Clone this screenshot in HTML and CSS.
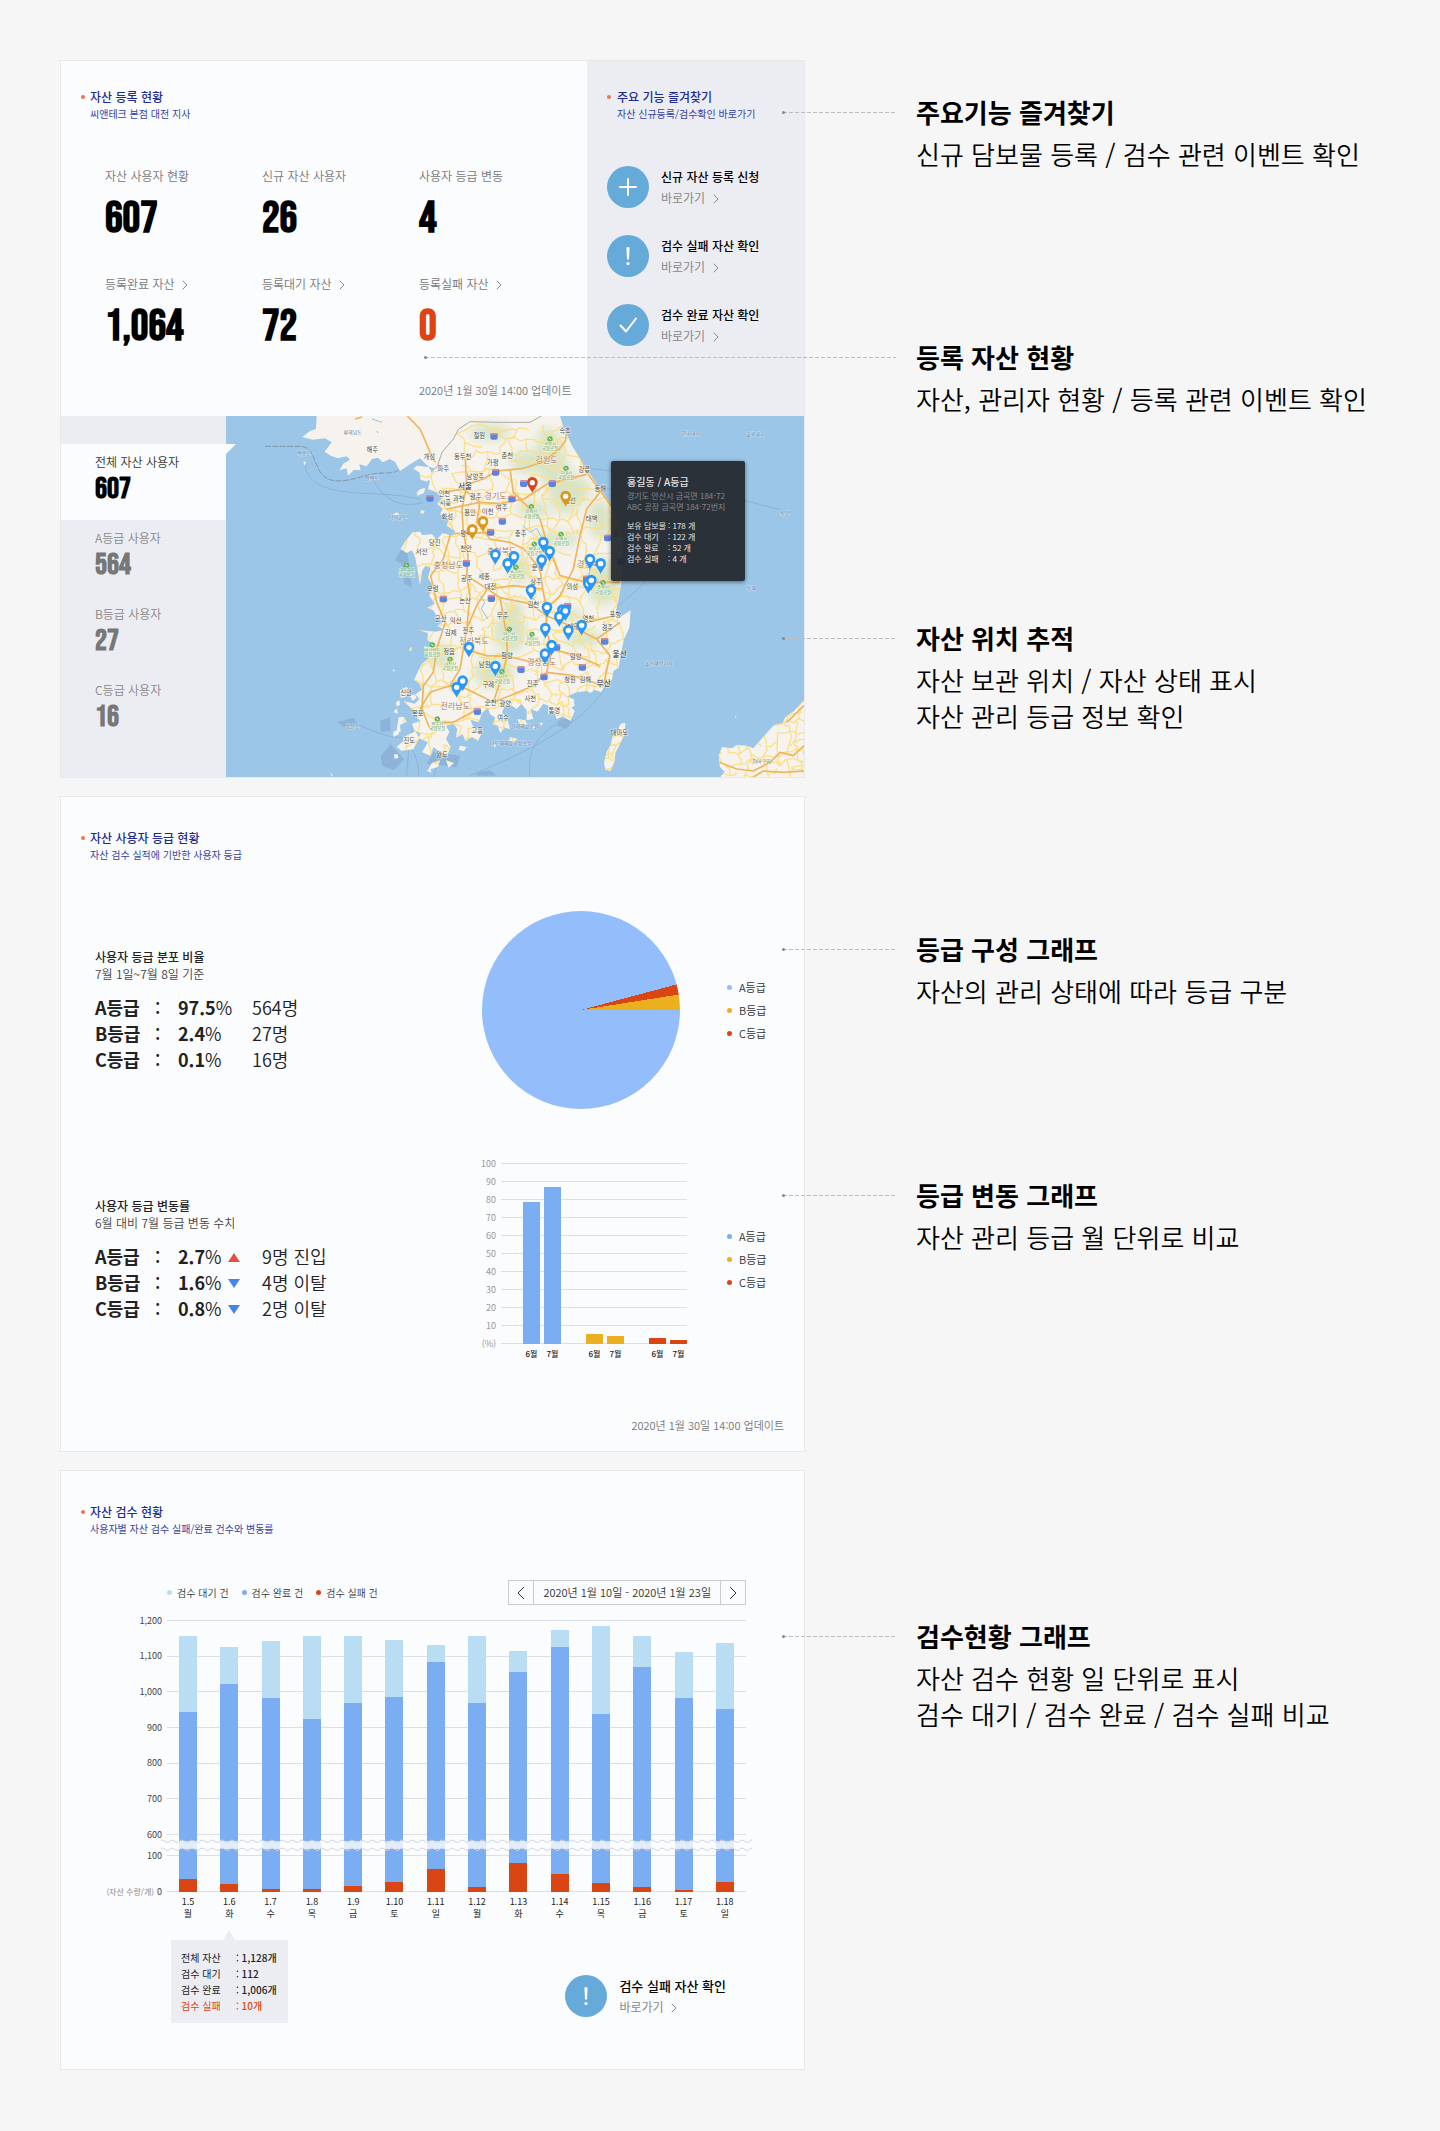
FILE: index.html
```html
<!DOCTYPE html>
<html lang="ko">
<head>
<meta charset="utf-8">
<meta name="viewport" content="width=device-width, initial-scale=1">
<title>자산 관리 대시보드</title>
<link rel="stylesheet" href="styles.css">
</head>
<body>
<svg class="sprite" aria-hidden="true">
  <symbol id="chevron" viewBox="0 0 6 10"><path d="M1 1l4 4-4 4" fill="none" stroke="currentColor" stroke-linecap="round"/></symbol>
  <symbol id="arrow-left" viewBox="0 0 8 14"><path d="M7 1L1 7l6 6" fill="none" stroke="currentColor"/></symbol>
  <symbol id="arrow-right" viewBox="0 0 8 14"><path d="M1 1l6 6-6 6" fill="none" stroke="currentColor"/></symbol>
  <symbol id="plus" viewBox="0 0 42 42"><circle cx="21" cy="21" r="21" fill="#66aada"/><path d="M21 13v16M13 21h16" stroke="#fff" stroke-width="2" stroke-linecap="round"/></symbol>
  <symbol id="alert" viewBox="0 0 42 42"><circle cx="21" cy="21" r="21" fill="#66aada"/><path d="M19.4 12.8q1.6-1.600 3.200 0L22 24.400h-2z" fill="#fff"/><circle cx="21" cy="28.600" r="1.600" fill="#fff"/></symbol>
  <symbol id="check" viewBox="0 0 42 42"><circle cx="21" cy="21" r="21" fill="#66aada"/><path d="M13.500 21.500l5.500 6 10-13" fill="none" stroke="#fff" stroke-width="2" stroke-linecap="round" stroke-linejoin="round"/></symbol>
</svg>

<main class="page">
  <section class="row">
    <article class="card">
      <div class="overview">
        <div class="overview-main">
          <header class="head"><h2>자산 등록 현황</h2><p>씨앤테크 본점 대전 지사</p></header>
          <dl class="stats">
            <div><dt>자산 사용자 현황</dt><dd>607</dd></div>
            <div><dt>신규 자산 사용자</dt><dd>26</dd></div>
            <div><dt>사용자 등급 변동</dt><dd>4</dd></div>
            <div><dt><a href="#done">등록완료 자산 <svg class="chev"><use href="#chevron"/></svg></a></dt><dd>1,064</dd></div>
            <div><dt><a href="#wait">등록대기 자산 <svg class="chev"><use href="#chevron"/></svg></a></dt><dd>72</dd></div>
            <div><dt><a href="#fail">등록실패 자산 <svg class="chev"><use href="#chevron"/></svg></a></dt><dd class="danger">0</dd></div>
          </dl>
          <div class="stats-foot"><p class="updated">2020년 1월 30일 14:00 업데이트</p></div>
        </div>
        <div class="quick">
          <header class="head"><h2>주요 기능 즐겨찾기</h2><p>자산 신규등록/검수확인 바로가기</p></header>
          <div class="quick-list">
            <a class="action" href="#new"><svg class="action-icon"><use href="#plus"/></svg><span class="action-text"><strong>신규 자산 등록 신청</strong><span>바로가기 <svg class="chev"><use href="#chevron"/></svg></span></span></a>
            <a class="action" href="#failed"><svg class="action-icon"><use href="#alert"/></svg><span class="action-text"><strong>검수 실패 자산 확인</strong><span>바로가기 <svg class="chev"><use href="#chevron"/></svg></span></span></a>
            <a class="action" href="#passed"><svg class="action-icon"><use href="#check"/></svg><span class="action-text"><strong>검수 완료 자산 확인</strong><span>바로가기 <svg class="chev"><use href="#chevron"/></svg></span></span></a>
          </div>
        </div>
      </div>
      <div class="tracking">
        <nav class="grades">
          <button class="grade active" type="button"><span>전체 자산 사용자</span><b>607</b></button>
          <button class="grade" type="button"><span>A등급 사용자</span><b>564</b></button>
          <button class="grade" type="button"><span>B등급 사용자</span><b>27</b></button>
          <button class="grade" type="button"><span>C등급 사용자</span><b>16</b></button>
        </nav>
        <div class="map">
          <svg class="map-canvas" viewBox="-522 21 1734 1083" preserveAspectRatio="xMidYMid slice" role="img" aria-label="자산 위치 지도">
            <defs>
              <path id="mainland" d="M-250 21L-252 60-270 66-293 84-262 92-225 88-205 100-226 128-208 140-186 148-160 142-150 152-170 164-182 184-160 178-156 200-138 182-118 184-122 166-100 172-84 150-66 146-52 160-30 150-14 160 0 186 30 166 60 148 84 172 100 178 112 172 96 190 74 206 90 216 84 240 110 250 126 268 112 284 128 300 120 316 146 330 140 350 166 366 158 380 128 372 110 392 96 376 66 378 60 368 38 370 26 384 14 400 2 420 20 432 36 424 46 446 52 480 60 528 66 486 76 470 92 476 84 506 98 530 88 560 104 584 82 596 100 604 116 630 128 640 112 650 134 662 108 668 58 664 84 672 82 694 104 704 98 716 70 712 82 730 86 748 66 764 56 784 42 812 58 824 66 842 46 856 58 870 44 884 10 876 36 900 60 910 46 922 62 936 36 944 44 966 62 972 56 988 84 1000 66 1030 92 1040 100 1014 116 1026 140 1044 152 1014 138 990 148 968 138 950 160 944 172 960 168 986 188 976 196 996 216 984 234 996 246 970 218 950 212 932 236 940 246 912 264 896 270 916 286 926 278 946 294 950 300 972 314 956 330 960 322 930 306 910 314 892 336 890 350 900 364 884 380 904 380 934 400 930 392 900 412 908 430 884 446 890 444 914 462 906 470 930 488 922 512 936 524 906 508 888 524 872 502 862 530 850 560 846 572 852 584 842 604 850 620 820 636 812 640 786 656 776 664 728 672 690 688 656 692 604 660 624 648 606 656 570 664 520 668 400 656 336 636 290 600 240 560 180 516 110 490 54 480 21Z"/>
              <path id="islands" d="M50 170l36 4 8 14-12 30-20-6-4-22-18-10zM62 240l14-4-4 16-20 8-2-10zM64 304l10 2-4 8-10-2zM-290 158l8 0-4 12zM-10 310l8 6-12 6-6-6zM-8 950l4-26 16 0 8 14-20 10 2 20-12-4zM-20 968l18-6-2 14-16 8zM10 985l36-18 12 20-18 34-36 4-14-12 20-16zM-20 910l10-12 4 16zM0 844l20-10 10 12-14 18-14 2zM30 860l14-4 6 10-12 10zM-12 880l10-6 2 14-10 4zM28 720l6-6 2 6-6 8zM-22 784l4-4 2 10zM-18 1036l10 0 4 10-12 4zM-210 1090l8 8-2 6zM96 1062l24-8-6 20-30 8zM138 1054l24 8-16 14zM180 1010l20 4-8 12-16-4zM330 985l22 4-8 10-16-4zM352 930l24 4 8 16-24-4zM486 886l34-16 4 20-22 12zM80 1084l12-4 2 12zM278 1006l12 2-6 8zM420 940l10 4-8 6zM398 950l8 4-8 8zM1006 920l4 4-4 4z"/>
              <path id="tsushima" d="M676 942l-14 2-12 26-12 10-6 28-12 20-8 34 4 20 16 4 12-30 2-24 14-28 14-30z"/>
              <path id="yamaguchi" d="M1212 874l-30 32-26 18-8 18-26 6-40 44-22 26-20-8-30-2-14 10-30-4-10 26 4 34 14 14-16 20H1212z"/>
              <clipPath id="land-clip"><use href="#mainland"/><use href="#islands"/><use href="#tsushima"/><use href="#yamaguchi"/></clipPath>
              <filter id="soft" x="-50%" y="-50%" width="200%" height="200%"><feGaussianBlur stdDeviation="14"/></filter>
            </defs>
            <rect x="-522" y="21" width="1734" height="1083" fill="#9cc6e8"/>
            <g fill="none" stroke="#84a9c9" stroke-width="2">
              <path d="M-405 112H-300C-240 112-270 210-190 216C-130 216-100 190-40 192C10 192 0 165 30 160" stroke="#8296a8" stroke-width="3" stroke-dasharray="18 4"/>
              <path d="M-285 165C-280 260-120 250-50 256S20 262 60 270M-80 215C-50 270 0 300 70 280"/>
              <path d="M560 178C800 200 840 225 1170 310M605 240C800 240 860 250 900 260C840 380 780 500 640 600M900 300L780 470M620 830C560 930 430 1010 210 1100M-130 945C-70 970-40 985 0 985C40 1000 20 1060 20 1100M40 960C10 1010 60 1030 55 1100M130 1050C100 1070 110 1090 100 1104M480 935C420 980 380 1010 390 1104"/>
            </g>
            <path fill="#8db4d8" d="M-190 940l50-14 14 20-40 8zM-58 1040l30-34 40 44-30 34-36-14zM-60 935l30-10 2 40-30 4zM18 400l-34 54 20 10 8 60 24 12zM480 930l40 0-20 30-30-10zM230 1090l40-6 20 16h-60zM100 1030l80 10-10 34-90-10z"/>
            <g fill="#f6f3ee"><use href="#mainland"/><use href="#islands"/><use href="#tsushima"/><use href="#yamaguchi"/></g>
            <g clip-path="url(#land-clip)">
              <g fill="#cfdfb8" opacity=".75" filter="url(#soft)">
                <path d="M420 60q60-10 70 60t60 90-10 80-90-20-50-120z"/>
                <ellipse cx="390" cy="160" rx="60" ry="34"/><ellipse cx="600" cy="330" rx="34" ry="60"/><ellipse cx="400" cy="300" rx="50" ry="24"/>
                <ellipse cx="470" cy="390" rx="70" ry="22"/><ellipse cx="360" cy="480" rx="34" ry="40"/><ellipse cx="610" cy="520" rx="50" ry="70"/>
                <ellipse cx="330" cy="670" rx="50" ry="60"/><ellipse cx="280" cy="790" rx="60" ry="44"/><ellipse cx="120" cy="740" rx="40" ry="34"/><ellipse cx="550" cy="690" rx="60" ry="22"/>
                <ellipse cx="520" cy="620" rx="30" ry="20"/><ellipse cx="270" cy="70" rx="60" ry="24"/><ellipse cx="340" cy="600" rx="30" ry="30"/>
              </g>
              <g id="minor-roads" fill="none" stroke="#fbe08a" stroke-width="4" stroke-linecap="round" stroke-linejoin="round"></g>
              <path fill="none" stroke="#8fc4ea" stroke-width="3" d="M370 350l20 20 20-12 14 26-10 20 26 0M240 560l14 20-10 20 20 30M386 560l20 14-6 24M560 460l10 20-4 20M-84 30l30 10M-70 66l4 6M440 640l10 30"/>
              <g fill="none" stroke="#f0b45c" stroke-width="5" stroke-linejoin="round">
                <path d="M22 21L60 60 76 96 90 130 106 160"/>
                <path d="M-135 30l22-6M190 230L250 210 290 186 370 178 430 158 478 120 496 96 500 66 540 140 560 190 604 250 640 300 664 380"/>
                <path d="M130 250L190 240 240 280 300 284 372 270 440 226 520 206 560 196"/>
                <path d="M196 150L200 230 186 300 190 370 204 440 200 500 262 540 300 566 390 584 440 620 510 650 560 640 646 620"/>
                <path d="M240 280L230 340 270 390 330 400 372 420 420 480 428 540 440 600 438 660 456 720 440 790 400 830 330 860 280 880 200 840 150 830 90 850 60 900"/>
                <path d="M120 320L150 380 130 450 92 500 110 580 136 640 110 720 100 790 70 830 66 900 90 960"/>
                <path d="M262 540L230 590 200 660 190 720 180 780 150 830M200 500L210 560 200 660M190 720L260 740 322 742 400 760 456 720 530 740 600 770"/>
                <path d="M330 180L340 250 420 330 440 400 480 500 560 520 660 520M440 600L480 560 520 480 540 380 560 300 600 250M510 650L590 690 630 740 610 830 520 800 440 790M590 690L660 640M240 280L140 300M300 566L320 680 322 742 300 820 280 880"/>
                <path d="M272 370L190 374 130 372M428 540L340 530 262 540M100 940L160 940 216 910 240 900M1212 890L1160 940M958 1060L1010 1080 1060 1086 1110 1060 1140 1030 1180 1040 1212 1010M1060 1104L1090 1086 1150 1090 1212 1086"/>
              </g>
            </g>
            <path d="M110 178L126 130 160 90 176 60 210 38 300 40 390 40 424 21" fill="none" stroke="#a9a9a6" stroke-width="3"/>
            <g id="map-labels" text-anchor="middle"></g>
            <g id="map-pins"></g>
          </svg>
          <aside class="map-tip">
            <h3>홍길동 / A등급</h3>
            <p>경기도 안산시 금곡면 184-72<br>ABC 공장 금곡면 184-72번지</p>
            <dl><dt>보유 담보물</dt><dd>: 178 개</dd><dt>검수 대기</dt><dd>: 122 개</dd><dt>검수 완료</dt><dd>: 52 개</dd><dt>검수 실패</dt><dd>: 4 개</dd></dl>
          </aside>
        </div>
      </div>
    </article>
    <div class="notes notes-assets">
      <section class="note"><h2>주요기능 즐겨찾기</h2><p>신규 담보물 등록 / 검수 관련 이벤트 확인</p></section>
      <section class="note wide"><h2>등록 자산 현황</h2><p>자산, 관리자 현황 / 등록 관련 이벤트 확인</p></section>
      <section class="note"><h2>자산 위치 추적</h2><p>자산 보관 위치 / 자산 상태 표시<br>자산 관리 등급 정보 확인</p></section>
    </div>
  </section>

  <section class="row">
    <article class="card roomy">
      <header class="head"><h2>자산 사용자 등급 현황</h2><p>자산 검수 실적에 기반한 사용자 등급</p></header>
      <div class="figure first">
        <div class="summary">
          <h3>사용자 등급 분포 비율</h3><p>7월 1일~7월 8일 기준</p>
          <table>
            <tr><th scope="row">A등급</th><td class="colon">:</td><td class="share"><b>97.5</b>%</td><td>564명</td></tr>
            <tr><th scope="row">B등급</th><td class="colon">:</td><td class="share"><b>2.4</b>%</td><td>27명</td></tr>
            <tr><th scope="row">C등급</th><td class="colon">:</td><td class="share"><b>0.1</b>%</td><td>16명</td></tr>
          </table>
        </div>
        <div class="pie" role="img" aria-label="등급 분포"></div>
        <ul class="legend"><li class="a">A등급</li><li class="b">B등급</li><li class="c">C등급</li></ul>
      </div>
      <div class="figure second">
        <div class="summary">
          <h3>사용자 등급 변동률</h3><p>6월 대비 7월 등급 변동 수치</p>
          <table>
            <tr><th scope="row">A등급</th><td class="colon">:</td><td class="rate"><b>2.7</b>%<i class="up"></i></td><td>9명 진입</td></tr>
            <tr><th scope="row">B등급</th><td class="colon">:</td><td class="rate"><b>1.6</b>%<i class="down"></i></td><td>4명 이탈</td></tr>
            <tr><th scope="row">C등급</th><td class="colon">:</td><td class="rate"><b>0.8</b>%<i class="down"></i></td><td>2명 이탈</td></tr>
          </table>
        </div>
        <div class="months">
          <div class="months-ticks"><span>100</span><span>90</span><span>80</span><span>70</span><span>60</span><span>50</span><span>40</span><span>30</span><span>20</span><span>10</span><span>(%)</span></div>
          <div class="months-bars">
            <div class="pair a"><i style="height:78.5%"></i><i style="height:87%"></i></div>
            <div class="pair b"><i style="height:5.5%"></i><i style="height:4.5%"></i></div>
            <div class="pair c"><i style="height:3.5%"></i><i style="height:2%"></i></div>
          </div>
          <div class="months-names"><div class="pair"><span>6월</span><span>7월</span></div><div class="pair"><span>6월</span><span>7월</span></div><div class="pair"><span>6월</span><span>7월</span></div></div>
        </div>
        <ul class="legend"><li class="a strong">A등급</li><li class="b">B등급</li><li class="c">C등급</li></ul>
      </div>
      <p class="updated card-updated">2020년 1월 30일 14:00 업데이트</p>
    </article>
    <div class="notes notes-grades">
      <section class="note"><h2>등급 구성 그래프</h2><p>자산의 관리 상태에 따라 등급 구분</p></section>
      <section class="note"><h2>등급 변동 그래프</h2><p>자산 관리 등급 월 단위로 비교</p></section>
    </div>
  </section>

  <section class="row">
    <article class="card roomy">
      <header class="head"><h2>자산 검수 현황</h2><p>사용자별 자산 검수 실패/완료 건수와 변동률</p></header>
      <div class="inspection">
        <div class="toolbar">
          <ul class="legend inline"><li class="w">검수 대기 건</li><li class="a strong">검수 완료 건</li><li class="c">검수 실패 건</li></ul>
          <div class="range">
            <button type="button" aria-label="이전 기간"><svg><use href="#arrow-left"/></svg></button>
            <span>2020년 1월 10일 - 2020년 1월 23일</span>
            <button type="button" aria-label="다음 기간"><svg><use href="#arrow-right"/></svg></button>
          </div>
        </div>
        <div class="daily">
          <div class="daily-ticks"><span>1,200</span><span>1,100</span><span>1,000</span><span>900</span><span>800</span><span>700</span><span>600</span><span>100</span><span><small>(자산 수량/개)</small> 0</span></div>
          <div class="daily-bars">
            <div><i style="height:76px"></i><i style="height:167px"></i><i style="height:13px"></i></div>
            <div><i style="height:37px"></i><i style="height:200px"></i><i style="height:8px"></i></div>
            <div><i style="height:57px"></i><i style="height:191px"></i><i style="height:3px"></i></div>
            <div><i style="height:83px"></i><i style="height:170px"></i><i style="height:3px"></i></div>
            <div><i style="height:67px"></i><i style="height:183px"></i><i style="height:6px"></i></div>
            <div><i style="height:57px"></i><i style="height:185px"></i><i style="height:10px"></i></div>
            <div><i style="height:17px"></i><i style="height:207px"></i><i style="height:23px"></i></div>
            <div><i style="height:67px"></i><i style="height:184px"></i><i style="height:5px"></i></div>
            <div><i style="height:21px"></i><i style="height:191px"></i><i style="height:29px"></i></div>
            <div><i style="height:17px"></i><i style="height:227px"></i><i style="height:18px"></i></div>
            <div><i style="height:88px"></i><i style="height:169px"></i><i style="height:9px"></i></div>
            <div><i style="height:31px"></i><i style="height:220px"></i><i style="height:5px"></i></div>
            <div><i style="height:46px"></i><i style="height:192px"></i><i style="height:2px"></i></div>
            <div><i style="height:66px"></i><i style="height:173px"></i><i style="height:10px"></i></div>
            <svg class="break" aria-hidden="true">
              <defs><pattern id="wave" width="10" height="12" patternUnits="userSpaceOnUse"><path d="M0 1q2.500 0 5 2t5-2M0 9q2.500 0 5 2t5-2" fill="none" stroke="#cfd3de"/></pattern></defs>
              <rect y="2" width="100%" height="8" fill="#fbfcfe" opacity=".8"/><rect width="100%" height="12" fill="url(#wave)"/>
            </svg>
          </div>
          <div class="daily-names"><span>1.5<br>월</span><span>1.6<br>화</span><span>1.7<br>수</span><span>1.8<br>목</span><span>1.9<br>금</span><span>1.10<br>토</span><span>1.11<br>일</span><span>1.12<br>월</span><span>1.13<br>화</span><span>1.14<br>수</span><span>1.15<br>목</span><span>1.16<br>금</span><span>1.17<br>토</span><span>1.18<br>일</span></div>
        </div>
        <div class="detail-row">
          <dl class="detail"><dt>전체 자산</dt><dd>: <b>1,128개</b></dd><dt>검수 대기</dt><dd>: <b>112</b></dd><dt>검수 완료</dt><dd>: <b>1,006개</b></dd><dt class="danger">검수 실패</dt><dd class="danger">: <b>10개</b></dd></dl>
          <a class="action large" href="#failed"><svg class="action-icon"><use href="#alert"/></svg><span class="action-text"><strong>검수 실패 자산 확인</strong><span>바로가기 <svg class="chev"><use href="#chevron"/></svg></span></span></a>
        </div>
      </div>
    </article>
    <div class="notes notes-inspection">
      <section class="note"><h2>검수현황 그래프</h2><p>자산 검수 현황 일 단위로 표시<br>검수 대기 / 검수 완료 / 검수 실패 비교</p></section>
    </div>
  </section>
</main>
<script src="map.js"></script>
</body>
</html>
```
FILE: styles.css
```css
* { box-sizing: border-box; margin: 0; padding: 0; }
body {
  background: #f6f6f6;
  color: #222;
  font-family: "Noto Sans CJK KR", "Noto Sans", sans-serif;
  font-size: 12px;
  line-height: 18px;
}
a { color: inherit; text-decoration: none; }
button { font: inherit; color: inherit; border: 0; background: none; text-align: left; cursor: pointer; }
ul { list-style: none; }
.sprite { position: absolute; width: 0; height: 0; }
.danger { color: #dc4513; }

.page { display: flex; flex-direction: column; gap: 18px; padding: 60px; }
.row { display: grid; grid-template-columns: 745fr 575fr; }
.card { display: flex; flex-direction: column; min-width: 0; background: #fbfcfe; border: 1px solid #e8e9ea; }
.roomy { padding-top: 32px; }

.head { position: relative; padding-left: 29px; color: #1d2b92; }
.head::before { content: ""; position: absolute; left: 20px; top: 7px; width: 4px; height: 4px; border-radius: 50%; background: #ee7350; }
.head h2 { font-size: 12px; font-weight: 500; line-height: 18px; }
.head p { font-size: 10px; line-height: 16px; color: #3542a3; }

.chev { width: 6px; height: 10px; margin-left: 4px; vertical-align: -1px; color: #888; }
.updated { font-size: 11px; line-height: 16px; font-weight: 350; color: #777; white-space: nowrap; }

.overview { display: grid; grid-template-columns: 526fr 217fr; }
.overview-main, .quick { padding-top: 27px; }
.stats { display: grid; grid-template-columns: repeat(3, 1fr); row-gap: 34px; padding: 45px 11px 0 44px; }
.stats dt { color: #777; font-weight: 350; }
.stats dd { margin-top: 12px; font: bold 44px/44px "Bebas Neue", "Liberation Sans Narrow", "Liberation Sans", sans-serif; color: #000; }
.stats dd.danger { color: #dc4513; }
.stats-foot { display: grid; grid-template-columns: repeat(3, 1fr); padding: 33px 11px 18px 44px; }
.stats-foot .updated { grid-column: 3; }

.quick { background: #ecedf3; }
.quick .head { padding-left: 30px; }
.quick-list { display: flex; flex-direction: column; gap: 27px; padding: 44px 20px 0; }
.action { display: flex; align-items: center; gap: 12px; }
.action-icon { flex: none; width: 42px; height: 42px; }
.action-text { display: flex; flex-direction: column; line-height: 21px; white-space: nowrap; color: #888; }
.action-text strong { font-weight: 500; color: #000; }
.large .action-text strong { font-size: 13px; }

.tracking { display: grid; grid-template-columns: 165fr 578fr; min-height: 361px; }
.grades { display: flex; flex-direction: column; padding-top: 28px; background: #ecedf3; }
.grade { position: relative; z-index: 1; display: flex; flex-direction: column; gap: 4px; height: 76px; padding: 9px 0 0 34px; line-height: 18px; color: #888; font-weight: 350; }
.grade b { font: bold 30px/28px "Bebas Neue", "Liberation Sans Narrow", "Liberation Sans", sans-serif; color: #777; }
.grade.active { background: #fbfcfe; color: #333; }
.grade.active b { color: #000; }
.grade.active::after { content: ""; position: absolute; left: 100%; top: 0; border-top: 10px solid #fbfcfe; border-right: 10px solid transparent; }

.map { position: relative; overflow: hidden; min-width: 0; }
.map-canvas { display: block; position: absolute; inset: 0; width: 100%; height: 100%; }
#map-labels text { font-size: 19px; fill: #4b4b48; paint-order: stroke; stroke: #fff; stroke-width: 3px; stroke-opacity: .7; }
#map-labels .province { font-size: 24px; fill: #a07c68; }
#map-labels .capital { font-size: 23px; fill: #222; }
#map-labels .park { font-size: 13px; fill: #4f9a4c; }
#map-labels .sea { font-size: 15px; fill: #5f7fa8; stroke-opacity: .4; }
.map-tip {
  position: absolute; left: 385px; top: 45px; width: 134px; min-height: 120px; padding: 13px 0 0 16px;
  border-radius: 2px; background: rgba(34, 38, 43, .93); box-shadow: 0 1px 4px rgba(0, 0, 0, .5);
  color: #e6e6e6; font-size: 8px; line-height: 11px; white-space: nowrap;
}
.map-tip h3 { font-size: 10px; line-height: 16px; font-weight: 500; }
.map-tip p { margin-bottom: 8px; color: #85878a; }
.map-tip dl { display: grid; grid-template-columns: 41px 1fr; }

.figure { display: grid; grid-template-columns: 387fr 245fr 77fr; align-items: center; padding-left: 34px; }
.first { margin-top: 48px; }
.second { margin-top: 49px; }
.summary h3 { font-size: 12px; line-height: 18px; font-weight: 500; }
.summary p { line-height: 16px; color: #444; font-weight: 350; }
.summary table { margin-top: 12px; border-collapse: collapse; font-size: 18px; line-height: 26px; font-weight: 350; text-align: left; white-space: nowrap; }
.summary th, .summary b { font-weight: 700; }
.summary th { width: 60px; }
.summary .colon { width: 23px; font-weight: 500; }
.summary .share { width: 74px; }
.summary .rate { width: 84px; }
.up, .down { display: inline-block; margin-left: 6px; vertical-align: 2px; border: 6px solid transparent; }
.up { border-top: 0; border-bottom: 9px solid #e2503f; }
.down { border-bottom: 0; border-top: 9px solid #4287e6; }

.pie { width: 198px; height: 198px; border-radius: 50%; background: conic-gradient(#94bdfb 75deg, #d94513 75deg 81deg, #ebb01f 81deg 90deg, #94bdfb 90deg); }
.legend { display: flex; flex-direction: column; gap: 5px; font-size: 11px; font-weight: 350; color: #333; white-space: nowrap; }
.legend li { display: flex; align-items: center; gap: 7px; }
.legend li::before { content: ""; width: 5px; height: 5px; border-radius: 50%; background: currentColor; }
.legend .a::before { background: #94bdfb; }
.legend .strong::before { background: #7badf2; }
.legend .b::before { background: #ebb01f; }
.legend .c::before { background: #d94513; }
.legend .w::before { background: #b9def4; }
.inline { flex-direction: row; gap: 13px; font-size: 10px; }
.inline li { gap: 5px; }

.months { display: grid; grid-template-columns: 41px 164px; grid-template-rows: 181px 16px; padding-top: 5px; }
.months-ticks { grid-area: 1 / 1 / 2 / 3; display: flex; flex-direction: column; justify-content: space-between; font-size: 9px; color: #999; }
.months-ticks span, .daily-ticks span { display: flex; align-items: center; justify-content: flex-end; height: 1px; white-space: nowrap; }
.months-ticks span::after, .daily-ticks span::after { content: ""; flex: none; height: 1px; background: #dcdfe7; }
.months-ticks span::after { width: 186px; margin-left: 5px; }
.months-bars { grid-area: 1 / 2; display: flex; align-items: flex-end; justify-content: space-between; z-index: 1; }
.months-names { grid-area: 2 / 2; display: flex; justify-content: space-between; padding-top: 4px; font-size: 8px; line-height: 12px; font-weight: 500; }
.pair { display: flex; align-items: flex-end; gap: 4px; height: 100%; }
.pair i, .pair span { width: 17px; text-align: center; }
.a i { background: #7badf2; }
.b i { background: #ebb01f; }
.c i { background: #d94513; }
.card-updated { margin: 57px 20px 18px auto; }

.inspection { padding: 43px 58px 46px 46px; }
.toolbar { display: flex; align-items: center; justify-content: space-between; padding-left: 60px; }
.range { display: flex; height: 25px; border: 1px solid #ccc; font-size: 11px; line-height: 23px; font-weight: 350; color: #333; white-space: nowrap; }
.range span { padding: 0 9px; border: solid #ccc; border-width: 0 1px; }
.range button { display: grid; place-items: center; width: 24px; }
.range svg { width: 8px; height: 14px; }

.daily { display: grid; grid-template-columns: 60px 1fr; grid-template-rows: 272px auto; margin-top: 15px; }
.daily-ticks { grid-area: 1 / 1 / 2 / 3; display: grid; grid-template-rows: repeat(6, 1fr) 21px 36px 1px; font-size: 9px; color: #444; }
.daily-ticks span::after { width: calc(100% - 60px); margin-left: 5px; }
.daily-ticks small { margin-right: 3px; font-size: 8px; color: #888; }
.daily-bars { grid-area: 1 / 2; position: relative; display: flex; justify-content: space-between; padding: 0 12px; }
.daily-bars div { display: flex; flex-direction: column; justify-content: flex-end; width: 18px; }
.daily-bars i:nth-child(1) { background: #b9def4; }
.daily-bars i:nth-child(2) { background: #7badf2; }
.daily-bars i:nth-child(3) { background: #d94513; }
.break { position: absolute; left: -6px; bottom: 41px; width: calc(100% + 12px); height: 12px; }
.daily-names { grid-area: 2 / 2; display: flex; justify-content: space-between; padding: 4px 12px 0; font-size: 9px; line-height: 12px; }
.daily-names span { display: flex; justify-content: center; width: 18px; text-align: center; white-space: nowrap; }

.detail-row { display: flex; align-items: flex-end; justify-content: space-between; margin-top: 20px; padding: 0 20px 0 64px; }
.detail { position: relative; display: grid; grid-template-columns: 55px 1fr; width: 117px; padding: 10px 0 9px 10px; background: #ecedf3; font-size: 10px; line-height: 16px; white-space: nowrap; }
.detail::before { content: ""; position: absolute; left: 52px; bottom: 100%; border: 6px solid transparent; border-top: 0; border-bottom: 10px solid #ecedf3; }
.detail b { font-weight: 500; }
.detail-row .action { margin-bottom: 6px; }

.notes { display: flex; flex-direction: column; padding-left: 111px; color: #000; }
.notes-assets { padding-top: 34px; gap: 167px; }
.notes-assets .note:last-child { margin-top: 36px; }
.notes-grades { padding-top: 135px; gap: 168px; }
.notes-inspection { padding-top: 148px; }
.note { position: relative; }
.note h2 { font-size: 26px; line-height: 36px; font-weight: 700; margin-bottom: 6px; }
.note p { font-size: 26px; line-height: 36px; font-weight: 350; white-space: nowrap; }
.note::before, .note::after { content: ""; position: absolute; top: 18px; right: calc(100% + 20px); width: 113px; }
.note::before { height: 1px; background: repeating-linear-gradient(90deg, #bdbdbd 0 4px, transparent 4px 6px); }
.note::after { top: 17px; margin-right: 111px; width: 3px; height: 3px; border-radius: 50%; background: #888; }
.wide::before { width: 471px; }
.wide::after { margin-right: 469px; }
```
FILE: map.js
```js
const NS = 'http://www.w3.org/2000/svg';
const add = (parent, tag, attrs, text) => {
  const el = document.createElementNS(NS, tag);
  for (const k in attrs) el.setAttribute(k, attrs[k]);
  if (text) el.textContent = text;
  parent.appendChild(el);
  return el;
};

/* Minor roads: a jittered mesh with a fixed seed */
let seed = 7;
const rnd = () => (seed = (seed * 16807) % 2147483647) / 2147483647;
const roads = document.getElementById('minor-roads');
const mesh = (x0, y0, cols, rows, step) => {
  const p = [];
  for (let r = 0; r < rows; r++) for (let c = 0; c < cols; c++) p.push([x0 + c * step + (rnd() - .5) * step, y0 + r * step + (rnd() - .5) * step]);
  let d = '';
  const link = (a, b) => {
    const f = t => [a[0] + (b[0] - a[0]) * t + (rnd() - .5) * 14, a[1] + (b[1] - a[1]) * t + (rnd() - .5) * 14].map(Math.round);
    d += `M${a.map(Math.round)}L${f(.3)}L${f(.65)}L${b.map(Math.round)}`;
  };
  for (let r = 0; r < rows; r++) for (let c = 0; c < cols; c++) {
    if (c < cols - 1 && rnd() < .75) link(p[r * cols + c], p[r * cols + c + 1]);
    if (r < rows - 1 && rnd() < .75) link(p[r * cols + c], p[(r + 1) * cols + c]);
  }
  add(roads, 'path', { d });
};
mesh(190, 60, 13, 4, 38);
mesh(20, 200, 18, 24, 38);
mesh(620, 950, 3, 5, 30);
mesh(950, 880, 10, 8, 30);

const labels = document.getElementById('map-labels');
const put = (cls, list) => list.split(' ').forEach(s => {
  const [t, x, y] = s.split(',');
  add(labels, 'text', { x, y: +y + 7, class: cls }, t);
});
[[282,82],[287,190],[371,224],[457,224],[90,268],[336,270],[307,337],[272,370],[623,387],[199,463],[130,570],[274,569],[614,697],[363,782],[547,775],[432,804],[232,908],[503,592],[663,457],[470,715],[560,510]].forEach(([x, y]) => {
  add(labels, 'rect', { x: x - 11, y: y - 10, width: 22, height: 20, rx: 6, fill: '#5b83e0' });
  add(labels, 'rect', { x: x - 11, y: y - 10, width: 22, height: 5, rx: 2, fill: '#d98a96' });
});
[[450,90,'설악산'],[498,178,'오대산'],[394,293,'치악산'],[483,376,'소백산'],[403,406,'월악산'],[348,475,'속리산'],[609,521,'주왕산'],[97,708,'변산반도'],[328,661,'덕유산'],[396,676,'가야산'],[150,751,'내장산'],[306,788,'지리산'],[112,930,'월출산'],[20,469,'태안해안']].forEach(([x, y, t]) => {
  add(labels, 'circle', { cx: x, cy: y, r: 8, fill: '#62b35c' });
  add(labels, 'path', { d: `M${x - 3} ${y - 3}l6 6`, stroke: '#fff', 'stroke-width': 3 });
  add(labels, 'text', { x, y: y + 20, class: 'park' }, t);
  add(labels, 'text', { x, y: y + 33, class: 'park' }, '국립공원');
});
put('', '개성,88,142 철원,238,80 속초,495,66 춘천,322,140 동두천,188,142 파주,130,180 강릉,553,182 가평,278,160 인천,133,254 남양주,226,202 시흥,136,282 과천,176,268 광주,227,263 동해,601,240 화성,142,322 용인,210,311 이천,263,308 여주,305,297 정선,510,276 평택,198,374 충주,362,374 태백,575,330 당진,104,400 천안,198,418 서산,65,427 공주,200,510 세종,252,502 대전,271,534 보령,98,538 논산,195,576 상주,408,519 의성,517,533 문경,413,477 김천,400,587 군산,122,630 익산,167,635 무주,308,619 김제,152,670 전주,205,665 정읍,147,728 남원,254,767 함양,321,741 대구,520,652 영천,565,628 포항,646,617 경주,622,657 밀양,527,744 창원,510,812 김해,556,812 진주,398,824 사천,391,868 구례,265,828 광양,316,884 순천,272,881 여수,309,927 고흥,231,964 통영,463,904 완도,126,1036 진도,28,994 목포,53,915 신안,18,851 대마도,658,972 해주,-83,122 울진,656,375');
put('province', '강원도,440,155 경기도,287,264 충청북도,305,427 충청남도,145,469 전라북도,222,698 경상남도,425,761 경상북도,575,466 전라남도,166,894');
put('capital', '서울,195,232 울산,659,736 부산,611,825');
put('sea', '백령도,-290,130 연평도,-84,207 덕적군도,-6,322 흑산도,-143,949 한국대지,872,71 울릉대지,1066,73 독도,1154,311 동해,1054,537 울산해양기지,776,760 다도해해상국립공원,332,1001 한려해상공원,374,950 야마구치,1085,1055 황해남도,-142,68');

const pins = document.getElementById('map-pins');
const pin = (color, list) => list.forEach(([x, y]) => {
  add(pins, 'path', { d: `M${x} ${y + 31}C${x - 4} ${y + 20} ${x - 16} ${y + 10} ${x - 16} ${y - 1}A16 16 0 0 1 ${x + 16} ${y - 1}C${x + 16} ${y + 10} ${x + 4} ${y + 20} ${x} ${y + 31}Z`, fill: color });
  add(pins, 'circle', { cx: x, cy: y, r: 8, fill: '#fff' });
});
pin('#da4315', [[397,221]]);
pin('#d9981f', [[497,262],[249,338],[217,362]]);
pin('#2b98f5', [[430,400],[449,427],[425,453],[286,437],[342,443],[323,464],[570,451],[602,464],[565,524],[574,514],[393,543],[441,595],[487,603],[496,606],[478,623],[436,658],[545,649],[505,664],[455,709],[435,735],[207,715],[286,772],[188,816],[170,835]]);
```
